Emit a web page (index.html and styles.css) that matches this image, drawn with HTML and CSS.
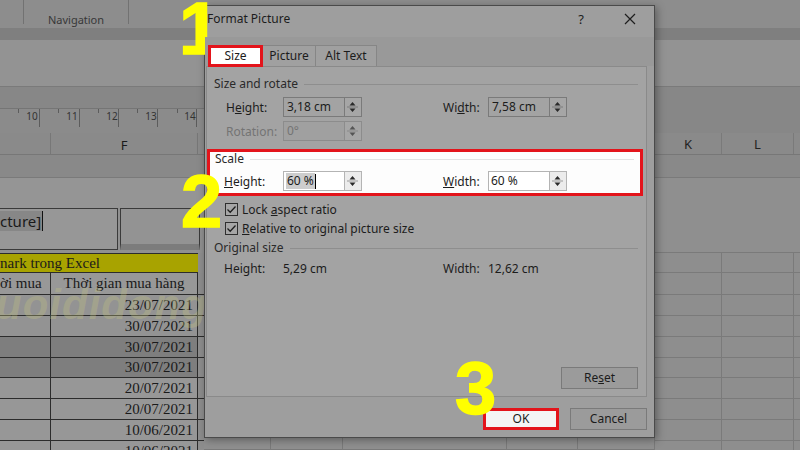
FILE: index.html
```html
<!DOCTYPE html>
<html>
<head>
<meta charset="utf-8">
<title>Format Picture</title>
<link rel="stylesheet" href="styles.css">
</head>
<body>
<div class="screen">
  <div class="ribbon">
    <div class="rb-groups">
      <span class="rb-sep first"></span>
      <span class="rb-label">Navigation</span>
      <span class="rb-sep"></span>
    </div>
    <div class="rb-band"></div>
    <div class="rb-formula"></div>
    <div class="rb-dark"></div>
    <div class="ruler-row">
      <svg class="ruler" width="204" height="25" viewBox="0 0 204 25">
        <rect width="204" height="25" fill="#8b8b8b"/>
        <line x1="0" y1="0.5" x2="204" y2="0.5" stroke="#757575"/>
        <g stroke="#5c5c5c" stroke-width="1">
          <line x1="39.5" y1="1" x2="39.5" y2="19"/>
          <line x1="79.5" y1="1" x2="79.5" y2="19"/>
          <line x1="118.5" y1="1" x2="118.5" y2="19"/>
          <line x1="157.5" y1="1" x2="157.5" y2="19"/>
          <line x1="196.5" y1="1" x2="196.5" y2="19"/>
          <line x1="18.5" y1="1" x2="18.5" y2="5"/>
          <line x1="58.5" y1="1" x2="58.5" y2="5"/>
          <line x1="98.5" y1="1" x2="98.5" y2="5"/>
          <line x1="137.5" y1="1" x2="137.5" y2="5"/>
          <line x1="177.5" y1="1" x2="177.5" y2="5"/>
        </g>
        <g class="ruler-num" fill="#333" font-size="10" text-anchor="middle">
          <text x="32" y="12">10</text>
          <text x="72" y="12">11</text>
          <text x="112" y="12">12</text>
          <text x="151" y="12">13</text>
          <text x="190" y="12">14</text>
        </g>
      </svg>
      <div class="rb-fill"></div>
    </div>
  </div>

  <div class="sheet">
    <div class="lcol">
      <div class="lrow hdr"><div class="c-a"></div><div class="c-f">F</div><div class="c-g"></div></div>
      <div class="lrow r1"></div>
      <div class="lrow r2"></div>
      <div class="lrow r3">
        <div class="tbox1"><span class="sel-text">cture]</span><span class="caret"></span></div>
        <div class="tbox2"></div>
      </div>
      <div class="lrow r4"><div class="c-y">nark trong Excel</div><div class="c-g"></div></div>
      <div class="lrow r5 tbl"><div class="c-a">ời mua</div><div class="c-f">Thời gian mua hàng</div><div class="c-g"></div></div>
      <div class="lrow drow light"><div class="c-a"></div><div class="c-f">23/07/2021</div><div class="c-g"></div></div>
      <div class="lrow drow light"><div class="c-a"></div><div class="c-f">30/07/2021</div><div class="c-g"></div></div>
      <div class="lrow drow dark"><div class="c-a"></div><div class="c-f">30/07/2021</div><div class="c-g"></div></div>
      <div class="lrow drow dark short"><div class="c-a"></div><div class="c-f">30/07/2021</div><div class="c-g"></div></div>
      <div class="lrow drow"><div class="c-a"></div><div class="c-f">20/07/2021</div><div class="c-g"></div></div>
      <div class="lrow drow"><div class="c-a"></div><div class="c-f">20/07/2021</div><div class="c-g"></div></div>
      <div class="lrow drow"><div class="c-a"></div><div class="c-f">10/06/2021</div><div class="c-g"></div></div>
      <div class="lrow drow"><div class="c-a"></div><div class="c-f">10/06/2021</div><div class="c-g"></div></div>
    </div>

    <div class="mcol">
      <div class="mfill"></div>
      <div class="mrow"><div class="m1"></div><div class="m2"></div><div class="m3"></div><div class="m4"></div><div class="m5"></div></div>
      <div class="mrow"><div class="m1"></div><div class="m2"></div><div class="m3"></div><div class="m4"></div><div class="m5"></div></div>
    </div>

    <div class="rcol">
      <div class="rrow hdr"><div class="c-k">K</div><div class="c-l">L</div><div class="c-m"></div></div>
      <div class="rrow r1"></div>
      <div class="rrow r23"></div>
      <div class="rrow grid h20"><div class="c-k"></div><div class="c-l"></div><div class="c-m"></div></div>
      <div class="rrow grid h22"><div class="c-k"></div><div class="c-l"></div><div class="c-m"></div></div>
      <div class="rrow grid"><div class="c-k"></div><div class="c-l"></div><div class="c-m"></div></div>
      <div class="rrow grid"><div class="c-k"></div><div class="c-l"></div><div class="c-m"></div></div>
      <div class="rrow grid"><div class="c-k"></div><div class="c-l"></div><div class="c-m"></div></div>
      <div class="rrow grid h20"><div class="c-k"></div><div class="c-l"></div><div class="c-m"></div></div>
      <div class="rrow grid"><div class="c-k"></div><div class="c-l"></div><div class="c-m"></div></div>
      <div class="rrow grid"><div class="c-k"></div><div class="c-l"></div><div class="c-m"></div></div>
      <div class="rrow grid"><div class="c-k"></div><div class="c-l"></div><div class="c-m"></div></div>
      <div class="rrow grid"><div class="c-k"></div><div class="c-l"></div><div class="c-m"></div></div>
    </div>
  </div>

  <div class="watermark">uoididong</div>

  <div class="dialog">
    <div class="dlg-title">
      <span class="dlg-name">Format Picture</span>
      <span class="dlg-help">?</span>
      <svg class="dlg-close" width="12" height="12" viewBox="0 0 12 12"><path d="M1 1 L11 11 M11 1 L1 11" stroke="#1e1e1e" stroke-width="1.2"/></svg>
    </div>
    <div class="tabs">
      <div class="tab active">Size</div>
      <div class="tab">Picture</div>
      <div class="tab">Alt Text</div>
    </div>
    <div class="panel">
      <div class="group-head"><span>Size and rotate</span><i></i></div>
      <div class="frow size-row">
        <span class="flabel">H<u>e</u>ight:</span>
        <div class="spin"><div class="spin-in">3,18 cm</div><div class="spin-btn"><svg width="15" height="18" viewBox="0 0 15 18"><path d="M4.5 7.5 L7.5 4 L10.5 7.5Z M4.5 10.5 L7.5 14 L10.5 10.5Z" fill="#2a2a2a"/><line x1="2" y1="9" x2="13" y2="9" stroke="#7a7a7a"/></svg></div></div>
        <span></span>
        <span class="flabel">Wi<u>d</u>th:</span>
        <div class="spin"><div class="spin-in">7,58 cm</div><div class="spin-btn"><svg width="15" height="18" viewBox="0 0 15 18"><path d="M4.5 7.5 L7.5 4 L10.5 7.5Z M4.5 10.5 L7.5 14 L10.5 10.5Z" fill="#2a2a2a"/><line x1="2" y1="9" x2="13" y2="9" stroke="#7a7a7a"/></svg></div></div>
      </div>
      <div class="frow size-row rot disabled">
        <span class="flabel">Rotation:</span>
        <div class="spin"><div class="spin-in">0°</div><div class="spin-btn"><svg width="15" height="18" viewBox="0 0 15 18"><path d="M4.5 7.5 L7.5 4 L10.5 7.5Z M4.5 10.5 L7.5 14 L10.5 10.5Z" fill="#555"/><line x1="2" y1="9" x2="13" y2="9" stroke="#888"/></svg></div></div>
      </div>
      <div class="scale-box">
        <div class="group-head light"><span>Scale</span><i></i></div>
        <div class="frow scale-row">
          <span class="flabel"><u>H</u>eight:</span>
          <div class="spin white"><div class="spin-in"><span class="sel">60 %</span><span class="caret2"></span></div><div class="spin-btn"><svg width="15" height="18" viewBox="0 0 15 18"><path d="M4.5 7.5 L7.5 4 L10.5 7.5Z M4.5 10.5 L7.5 14 L10.5 10.5Z" fill="#2a2a2a"/><line x1="2" y1="9" x2="13" y2="9" stroke="#9a9a9a"/></svg></div></div>
          <span></span>
          <span class="flabel"><u>W</u>idth:</span>
          <div class="spin white"><div class="spin-in">60 %</div><div class="spin-btn"><svg width="15" height="18" viewBox="0 0 15 18"><path d="M4.5 7.5 L7.5 4 L10.5 7.5Z M4.5 10.5 L7.5 14 L10.5 10.5Z" fill="#2a2a2a"/><line x1="2" y1="9" x2="13" y2="9" stroke="#9a9a9a"/></svg></div></div>
        </div>
      </div>
      <div class="check-row first">
        <span class="cb"><svg width="11" height="11" viewBox="0 0 11 11"><path d="M1.5 5.5 L4.2 8.2 L9.5 2.5" fill="none" stroke="#1e1e1e" stroke-width="1.3"/></svg></span>
        <span>Lock <u>a</u>spect ratio</span>
      </div>
      <div class="check-row">
        <span class="cb"><svg width="11" height="11" viewBox="0 0 11 11"><path d="M1.5 5.5 L4.2 8.2 L9.5 2.5" fill="none" stroke="#1e1e1e" stroke-width="1.3"/></svg></span>
        <span><u>R</u>elative to original picture size</span>
      </div>
      <div class="group-head orig"><span>Original size</span><i></i></div>
      <div class="frow orig-row">
        <span class="flabel">Height:</span>
        <span class="val">5,29 cm</span>
        <span></span>
        <span class="flabel">Width:</span>
        <span class="val">12,62 cm</span>
      </div>
      <div class="panel-foot"><div class="btn reset">Re<u>s</u>et</div></div>
    </div>
    <div class="dlg-foot">
      <div class="btn ok">OK</div>
      <div class="btn cancel">Cancel</div>
    </div>
  </div>

  <div class="step s1">1</div>
  <div class="step s2">2</div>
  <div class="step s3">3</div>
</div>
</body>
</html>
```

FILE: styles.css
```css
html, body {
  margin: 0;
  padding: 0;
}
body {
  font-family: "Noto Sans", "Open Sans", sans-serif;
  background: #8c8c8c;
}
.screen {
  position: relative;
  width: 800px;
  height: 450px;
  overflow: hidden;
  background: #8c8c8c;
}

/* ---------- ribbon ---------- */
.ribbon {
  display: flex;
  flex-direction: column;
}
.rb-groups {
  height: 28px;
  background: #8d8d8d;
  display: flex;
  align-items: flex-start;
}
.rb-sep {
  width: 1px;
  height: 24px;
  background: #727272;
}
.rb-sep.first {
  margin-left: 23px;
}
.rb-label {
  width: 104px;
  text-align: center;
  font-size: 11px;
  line-height: 14px;
  padding-top: 13px;
  color: #383838;
}
.rb-band {
  height: 12px;
  background: #7f7f7f;
}
.rb-formula {
  height: 46px;
  background: #939393;
  border-bottom: 1px solid #7a7a7a;
}
.rb-dark {
  height: 21px;
  background: #878787;
}
.ruler-row {
  display: flex;
  height: 25px;
}
.ruler {
  display: block;
  flex: none;
}
.ruler-num {
  font-family: "Noto Sans", sans-serif;
}
.rb-fill {
  flex: 1;
  background: #878787;
}

/* ---------- sheet ---------- */
.sheet {
  display: flex;
  height: 317px;
}
.lcol {
  width: 204px;
  flex: none;
  display: flex;
  flex-direction: column;
  font-family: "Liberation Serif", "Times New Roman", serif;
  color: #1a1a1a;
}
.lrow {
  display: flex;
  box-sizing: border-box;
  flex: none;
}
.c-a {
  width: 51px;
  flex: none;
  box-sizing: border-box;
  border-right: 1px solid #2c2c2c;
}
.c-f {
  width: 147px;
  flex: none;
  box-sizing: border-box;
}
.c-g {
  width: 6px;
  flex: none;
  background: #8d8d8d;
}
.lrow.hdr {
  height: 22px;
  background: #8a8a8a;
  border-bottom: 1px solid #777;
  font-family: "Noto Sans", sans-serif;
  font-size: 13px;
}
.lrow.hdr .c-a {
  border-right-color: #777;
}
.lrow.hdr .c-f {
  border-right: 1px solid #777;
  text-align: center;
  line-height: 22px;
  padding-top: 1px;
}
.lrow.hdr .c-g {
  background: #8a8a8a;
}
.lrow.r1 {
  height: 23px;
  background: #898989;
  border-bottom: 1px solid #7a7a7a;
}
.lrow.r2 {
  height: 30px;
  background: #959595;
}
.lrow.r3 {
  height: 45px;
  background: #909090;
}
.tbox1 {
  width: 118px;
  height: 42px;
  box-sizing: border-box;
  border: 1.5px solid #3a3a3a;
  border-left: none;
  background: #979797;
  font-family: "Noto Sans", sans-serif;
  font-size: 15px;
  color: #1a1a1a;
  padding-top: 2px;
  display: flex;
  align-items: flex-start;
}
.sel-text {
  background: #878787;
  line-height: 20px;
  padding-right: 1px;
}
.caret {
  width: 1px;
  height: 20px;
  background: #111;
}
.tbox2 {
  width: 80px;
  height: 42px;
  margin-left: 2px;
  box-sizing: border-box;
  border: 1.5px solid #3a3a3a;
  border-bottom: 6px solid #7c7c7c;
  background: #939393;
}
.lrow.r4 {
  height: 20px;
}
.c-y {
  width: 198px;
  flex: none;
  box-sizing: border-box;
  background: #a8a300;
  border-top: 1px solid #2c2c2c;
  border-bottom: 1px solid #2c2c2c;
  font-size: 15px;
  line-height: 18px;
  white-space: nowrap;
  overflow: hidden;
}
.lrow.r4 .c-g {
  background: #8e8e8e;
}
.tbl {
  border-bottom: 1px solid #2c2c2c;
}
.lrow.r5 {
  height: 22px;
  background: #989898;
  font-size: 15px;
  line-height: 21px;
}
.lrow.r5 .c-a {
  text-align: right;
  padding-right: 10px;
  white-space: nowrap;
  overflow: hidden;
}
.lrow.r5 .c-f {
  text-align: center;
  border-right: 1px solid #2c2c2c;
}
.drow {
  height: 21px;
  background: #979797;
  border-bottom: 1px solid #2c2c2c;
  font-size: 15px;
  line-height: 20px;
}
.drow.short {
  height: 20px;
  line-height: 19px;
}
.drow.light {
  background: #939393;
}
.drow.dark {
  background: #7e7e7e;
}
.drow .c-f {
  text-align: right;
  padding-right: 4px;
  border-right: 1px solid #2c2c2c;
}

.mcol {
  width: 451px;
  flex: none;
  display: flex;
  flex-direction: column;
}
.mfill {
  height: 287px;
  background: #8f8f8f;
}
.mrow {
  display: flex;
  height: 21px;
  box-sizing: border-box;
  border-bottom: 1px solid #7a7a7a;
  background: #8f8f8f;
}
.mrow div {
  box-sizing: border-box;
  border-right: 1px solid #7a7a7a;
}
.m1 { width: 67px; }
.m2 { width: 72px; }
.m3 { width: 164px; }
.m4 { width: 71px; }
.m5 { width: 77px; }

.rcol {
  width: 145px;
  flex: none;
  display: flex;
  flex-direction: column;
  background: #8e8e8e;
}
.rrow {
  display: flex;
  box-sizing: border-box;
  flex: none;
}
.c-k {
  width: 67px;
  box-sizing: border-box;
  border-right: 1px solid #7a7a7a;
}
.c-l {
  width: 72px;
  box-sizing: border-box;
  border-right: 1px solid #7a7a7a;
}
.c-m {
  width: 6px;
}
.rrow.hdr {
  height: 22px;
  background: #8a8a8a;
  border-bottom: 1px solid #777;
  font-size: 13px;
  color: #222;
  text-align: center;
  line-height: 22px;
}
.rrow.r1 {
  height: 23px;
  background: #898989;
  border-bottom: 1px solid #7a7a7a;
}
.rrow.r23 {
  height: 75px;
  background: #8f8f8f;
  border-bottom: 1px solid #7a7a7a;
}
.rrow.grid {
  height: 21px;
  background: #8e8e8e;
  border-bottom: 1px solid #7a7a7a;
}
.rrow.grid.h20 { height: 20px; }
.rrow.grid.h22 { height: 22px; }

.watermark {
  position: absolute;
  left: -4px;
  top: 284px;
  font-family: "Liberation Sans", sans-serif;
  font-weight: bold;
  font-style: italic;
  font-size: 42px;
  line-height: 1;
  color: rgba(195, 195, 130, 0.32);
  letter-spacing: 1px;
  white-space: nowrap;
}

/* ---------- dialog ---------- */
.dialog {
  position: absolute;
  left: 204px;
  top: 5px;
  width: 451px;
  height: 433px;
  box-sizing: border-box;
  border: 1px solid #4a4a4a;
  background: #9e9e9e;
  box-shadow: 2px 2px 8px rgba(0, 0, 0, 0.35);
  font-size: 12px;
  color: #1c1c1c;
  display: flex;
  flex-direction: column;
}
.dlg-title {
  height: 31px;
  box-sizing: border-box;
  padding: 5px 18px 0 2px;
  display: flex;
  align-items: flex-start;
  line-height: 16px;
}
.dlg-name {
  flex: 1;
  font-size: 12px;
}
.dlg-help {
  width: 16px;
  text-align: center;
  font-size: 13px;
  margin-right: 35px;
}
.dlg-close {
  margin-top: 2px;
}
.tabs {
  height: 29px;
  box-sizing: border-box;
  padding: 8px 0 0 3px;
  background: #999;
  display: flex;
  align-items: flex-end;
  position: relative;
  z-index: 1;
}
.tab {
  height: 21px;
  box-sizing: border-box;
  border: 1px solid #868686;
  border-bottom: none;
  background: #a0a0a0;
  line-height: 19px;
  text-align: center;
  font-size: 12px;
}
.tab:nth-child(2) { width: 53px; border-left: none; }
.tab:nth-child(3) { width: 61px; border-left: none; }
.tab.active {
  width: 55px;
  background: #fff;
  border: 3px solid #e3141b;
  line-height: 15px;
  height: 22px;
  margin-bottom: -1px;
}
.panel {
  margin-left: 1px;
  width: 441px;
  height: 331px;
  box-sizing: border-box;
  border: 1px solid #8a8a8a;
  background: #a3a3a3;
  display: flex;
  flex-direction: column;
  padding-top: 9px;
  padding-bottom: 7px;
}
.group-head {
  height: 16px;
  line-height: 16px;
  padding-left: 7px;
  margin-right: 8px;
  display: flex;
  align-items: center;
  color: #2a2a2a;
  flex: none;
}
.group-head i {
  flex: 1;
  height: 0;
  border-top: 1px solid #8e8e8e;
  margin-left: 6px;
}
.group-head.light {
  height: 14px;
  line-height: 14px;
  padding-left: 5px;
  margin-right: 6px;
}
.group-head.light i {
  border-top-color: #e2e2e2;
}
.frow {
  display: grid;
  grid-template-columns: 57px 79px 81px 45px 80px;
  height: 20px;
  align-items: center;
  flex: none;
}
.size-row {
  margin-left: 19px;
  margin-top: 5px;
}
.size-row.rot {
  margin-top: 4px;
}
.spin {
  display: flex;
  height: 20px;
}
.spin-in {
  width: 62px;
  box-sizing: border-box;
  border: 1px solid #7a7a7a;
  background: #a3a3a3;
  padding-left: 3px;
  line-height: 18px;
  display: flex;
  align-items: center;
}
.spin-btn {
  width: 17px;
  box-sizing: border-box;
  border: 1px solid #7a7a7a;
  border-left: none;
  background: #a6a6a6;
  display: flex;
}
.spin-btn svg {
  display: block;
}
.disabled {
  color: #747474;
}
.disabled .spin-in {
  border-color: #8c8c8c;
  background: #a0a0a0;
}
.disabled .spin-btn {
  border-color: #8c8c8c;
}
.scale-box {
  margin-top: 8px;
  width: 436px;
  height: 47px;
  box-sizing: border-box;
  border: 3px solid #e3141b;
  background: #fdfdfd;
  flex: none;
}
.scale-row {
  grid-template-columns: 59px 79px 81px 45px 80px;
  margin-left: 14px;
  margin-top: 5px;
}
.spin.white .spin-in {
  background: #fff;
  border-color: #b4b4b4;
  padding-left: 2px;
}
.spin.white .spin-btn {
  background: #ececec;
  border-color: #b4b4b4;
}
.sel {
  background: #cdcdcd;
  padding: 0 1px;
  line-height: 16px;
}
.caret2 {
  width: 1px;
  height: 15px;
  background: #000;
}
.check-row {
  display: flex;
  align-items: center;
  height: 14px;
  margin-left: 18px;
  margin-top: 5px;
  flex: none;
}
.check-row.first {
  margin-top: 6px;
}
.cb {
  width: 13px;
  height: 13px;
  box-sizing: border-box;
  border: 1px solid #2e2e2e;
  background: #a6a6a6;
  margin-right: 4px;
  display: flex;
  align-items: center;
  justify-content: center;
}
.cb svg {
  display: block;
}
.group-head.orig {
  margin-top: 5px;
}
.orig-row {
  grid-template-columns: 59px 79px 81px 45px 80px;
  margin-left: 17px;
  margin-top: 4px;
  height: 16px;
}
.panel-foot {
  margin-top: auto;
  display: flex;
  justify-content: flex-end;
  padding-right: 8px;
}
.btn {
  height: 22px;
  box-sizing: border-box;
  border: 1px solid #7a7a7a;
  background: #9b9b9b;
  text-align: center;
  line-height: 20px;
  font-size: 12px;
}
.btn.reset {
  width: 77px;
}
.dlg-foot {
  display: flex;
  justify-content: flex-end;
  gap: 11px;
  padding-right: 7px;
  margin-top: 11px;
}
.btn.ok {
  width: 76px;
  background: #f4f4f4;
  border: 3px solid #e3141b;
  line-height: 16px;
}
.btn.cancel {
  width: 77px;
}

/* ---------- step numbers ---------- */
.step {
  position: absolute;
  font-family: "Liberation Sans", "Arial", sans-serif;
  font-weight: bold;
  font-size: 74px;
  line-height: 1;
  color: #ffff00;
  -webkit-text-stroke: 1.5px #ffff00;
}
.s1 { left: 179px; top: -8px; }
.s2 { left: 181px; top: 165px; }
.s3 { left: 455px; top: 352px; }
```
